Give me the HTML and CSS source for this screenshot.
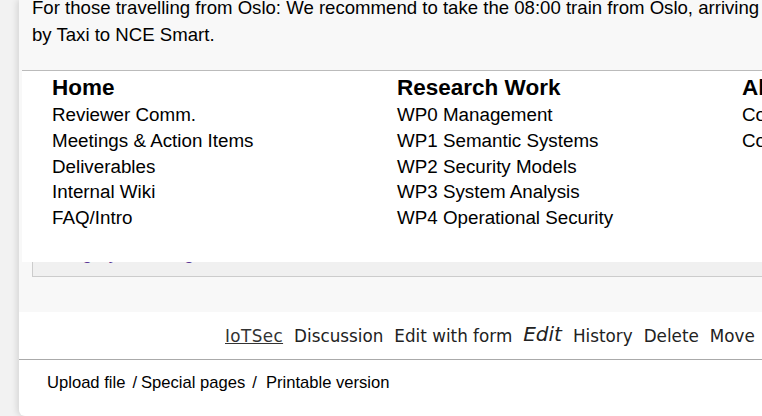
FILE: index.html
```html
<!DOCTYPE html>
<html lang="en">
<head>
  <meta charset="UTF-8">
  <title>IoTSec</title>
  <link rel="stylesheet" href="styles.css">
</head>
<body>

  <div class="page">

    <!-- Article body -->
    <div class="content">
      <p class="intro">For those travelling from Oslo: We recommend to take the 08:00 train from Oslo, arriving at 10:15, and then<br>by Taxi to NCE Smart.</p>

      <div class="catlinks">
        <a href="#">Category: Meeting</a>
      </div>
    </div>

    <!-- Open menu from the top bar -->
    <div class="dropdown">
      <div class="menu-col">
        <div class="menu-head">Home</div>
        <a href="#">Reviewer Comm.</a>
        <a href="#">Meetings &amp; Action Items</a>
        <a href="#">Deliverables</a>
        <a href="#">Internal Wiki</a>
        <a href="#">FAQ/Intro</a>
      </div>
      <div class="menu-col">
        <div class="menu-head">Research Work</div>
        <a href="#">WP0 Management</a>
        <a href="#">WP1 Semantic Systems</a>
        <a href="#">WP2 Security Models</a>
        <a href="#">WP3 System Analysis</a>
        <a href="#">WP4 Operational Security</a>
      </div>
      <div class="menu-col">
        <div class="menu-head">All Pages</div>
        <a href="#">Contact</a>
        <a href="#">Consortium</a>
      </div>
    </div>

    <!-- Page actions -->
    <div class="actions">
      <a href="#" class="current">IoTSec</a>
      <a href="#">Discussion</a>
      <a href="#">Edit with form</a>
      <a href="#" class="edit">Edit</a>
      <a href="#">History</a>
      <a href="#">Delete</a>
      <a href="#">Move</a>
      <a href="#">Watch</a>
    </div>

    <!-- Footer tools -->
    <div class="tools">
      <a href="#">Upload file</a>
      <span class="sep">/</span>
      <a href="#">Special pages</a>
      <span class="sep wide">/</span>
      <a href="#">Printable version</a>
    </div>

  </div>

</body>
</html>
```

FILE: styles.css
```css
html, body {
  margin: 0;
  padding: 0;
  height: 100%;
  overflow: hidden;
}

body {
  background: #f2f2f2;
  font-family: 'Liberation Sans', Arial, sans-serif;
  color: #000;
}

a {
  color: inherit;
  text-decoration: none;
}

.page {
  position: relative;
  margin-left: 19px;
  width: 1200px;
  height: 100%;
  background: #fff;
  border-bottom-left-radius: 6px;
  box-shadow: -2px 0 6px rgba(0, 0, 0, 0.12);
}

.content {
  background: #f8f8f8;
  padding: 0 0 35px 13px;
  height: 277px;
  overflow: hidden;
}

.intro {
  margin: -6px 0 0 0;
  font-size: 18.6px;
  line-height: 27px;
  white-space: nowrap;
}

.catlinks {
  margin-top: 191px;
  width: 1100px;
  background: #f0f0f0;
  border: 1px solid #ccc;
  padding: 2px 10px 12px;
  font-size: 18.5px;
  line-height: 22px;
}

.catlinks a {
  color: #5a3696;
}

.dropdown {
  position: absolute;
  top: 70px;
  left: 3px;
  right: 0;
  height: 191px;
  background: #fff;
  border-top: 1px solid #bbb;
  display: flex;
  padding-left: 30px;
}

.menu-col {
  width: 345px;
  flex-shrink: 0;
  display: flex;
  flex-direction: column;
  padding-top: 4px;
}

.menu-head {
  font-size: 22.5px;
  font-weight: bold;
  line-height: 26px;
  margin-bottom: 1px;
}

.menu-col a {
  font-size: 18.8px;
  line-height: 25.8px;
}

.actions {
  display: flex;
  align-items: center;
  gap: 11px;
  height: 47px;
  padding-left: 206px;
  border-bottom: 1px solid #aaa;
  font-family: 'DejaVu Sans', Verdana, sans-serif;
  font-size: 16.8px;
  color: #222;
  white-space: nowrap;
}

.actions .current {
  text-decoration: underline;
  color: #333;
  letter-spacing: 0.4px;
}

.actions .edit {
  font-style: italic;
  font-size: 20px;
  margin-top: -4px;
}

.tools {
  display: flex;
  align-items: center;
  height: 45px;
  padding-left: 28px;
  font-size: 16.6px;
}

.tools .sep {
  margin: 0 4px 0 7px;
}

.tools .sep.wide {
  margin: 0 9px 0 7px;
}
```
